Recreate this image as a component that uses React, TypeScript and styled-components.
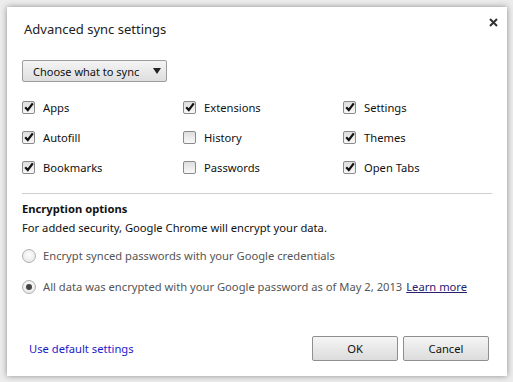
import styled, { createGlobalStyle } from "styled-components";

const GlobalStyle = createGlobalStyle`
  html, body {
    margin: 0;
    padding: 0;
    background: #ececec;
  }
  body {
    padding: 7px 6px 6px 7px;
    font-family: "Noto Sans", "Open Sans", sans-serif;
  }
`;

const Dialog = styled.div`
  position: relative;
  width: 500px;
  height: 369px;
  box-sizing: border-box;
  background: #fff;
  box-shadow: 0 0 6px rgba(0, 0, 0, 0.4);
  padding: 0 15px;
  display: flex;
  flex-direction: column;
  color: #111;
  font-size: 11.2px;
  white-space: nowrap;
`;

const Title = styled.h1`
  margin: 13px 0 0 2px;
  font-size: 13px;
  font-weight: normal;
  line-height: 18px;
  color: #222;
`;

const Close = styled.button`
  position: absolute;
  top: 9px;
  right: 8px;
  width: 12px;
  height: 12px;
  padding: 0;
  border: none;
  background: none;
  display: flex;
  align-items: center;
  justify-content: center;
`;

const SelectButton = styled.button`
  margin-top: 22px;
  width: 145px;
  height: 22px;
  box-sizing: border-box;
  border: 1px solid #9c9c9c;
  border-radius: 2px;
  background: linear-gradient(#f4f4f4, #dedede);
  display: flex;
  align-items: center;
  justify-content: space-between;
  padding: 0 5px 0 10px;
  font-family: inherit;
  font-size: 11px;
  color: #111;
  white-space: nowrap;
`;

const Arrow = styled.span`
  width: 0;
  height: 0;
  border-left: 4.5px solid transparent;
  border-right: 4.5px solid transparent;
  border-top: 6px solid #222;
`;

const SyncGrid = styled.div`
  margin-top: 10px;
  display: grid;
  grid-template-columns: 161px 160px 1fr;
  grid-auto-rows: 30px;
`;

const Option = styled.label`
  display: flex;
  align-items: center;
  gap: 8px;
  height: 30px;
`;

const Box = styled.span`
  width: 13px;
  height: 13px;
  box-sizing: border-box;
  border: 1px solid #8a8a8a;
  border-radius: 2px;
  background: linear-gradient(#dedede, #f8f8f8);
  display: flex;
  align-items: center;
  justify-content: center;
`;

const Divider = styled.hr`
  margin: 11px 0 0;
  border: none;
  border-top: 1px solid #cfcfcf;
`;

const SectionTitle = styled.h2`
  margin: 7px 0 0;
  font-size: 11.2px;
  font-weight: bold;
  line-height: 16px;
`;

const Note = styled.p`
  margin: 3px 0 0;
  line-height: 16px;
`;

const RadioRow = styled.label<{ $first?: boolean }>`
  display: flex;
  align-items: center;
  gap: 7px;
  height: 31px;
  margin-top: ${(p) => (p.$first ? "4px" : "0")};
  color: #555;
`;

const Radio = styled.span<{ $on?: boolean }>`
  width: 14px;
  height: 14px;
  box-sizing: border-box;
  border-radius: 50%;
  border: 1px solid #b0b0b0;
  background: radial-gradient(circle at 50% 40%, #fdfdfd, #e2e2e2);
  display: flex;
  align-items: center;
  justify-content: center;
  &::after {
    content: "";
    display: ${(p) => (p.$on ? "block" : "none")};
    width: 6px;
    height: 6px;
    border-radius: 50%;
    background: #444;
  }
`;

const LearnMore = styled.a`
  color: #28206e;
  text-decoration: underline;
  margin-left: 4px;
`;

const Footer = styled.div`
  margin-top: auto;
  margin-bottom: 15px;
  display: flex;
  align-items: center;
  padding: 0 3px 0 7px;
`;

const DefaultLink = styled.a`
  color: #1a1acd;
  text-decoration: none;
  flex: 1;
`;

const DialogButton = styled.button`
  width: 86px;
  height: 25px;
  box-sizing: border-box;
  border: 1px solid #8f8f8f;
  border-radius: 2px;
  background: linear-gradient(#f5f5f5, #dcdcdc);
  font-family: inherit;
  font-size: 11.2px;
  color: #111;
  & + & {
    margin-left: 5px;
  }
`;

const Check = ({ on }: { on: boolean }) => (
  <Box>
    {on && (
      <svg width="10" height="10" viewBox="0 0 10 10">
        <path d="M1.2 5.2 L3.8 8 L8.8 1.4" fill="none" stroke="#111" strokeWidth="2.2" />
      </svg>
    )}
  </Box>
);

const items: [string, boolean][] = [
  ["Apps", true],
  ["Extensions", true],
  ["Settings", true],
  ["Autofill", true],
  ["History", false],
  ["Themes", true],
  ["Bookmarks", true],
  ["Passwords", false],
  ["Open Tabs", true],
];

export default function App() {
  return (
    <>
      <GlobalStyle />
      <Dialog>
        <Title>Advanced sync settings</Title>
        <Close aria-label="Close">
          <svg width="9" height="9" viewBox="0 0 9 9">
            <path d="M1 1 L8 8 M8 1 L1 8" stroke="#333" strokeWidth="2" />
          </svg>
        </Close>
        <SelectButton>
          Choose what to sync
          <Arrow />
        </SelectButton>
        <SyncGrid>
          {items.map(([name, on]) => (
            <Option key={name}>
              <Check on={on} />
              {name}
            </Option>
          ))}
        </SyncGrid>
        <Divider />
        <SectionTitle>Encryption options</SectionTitle>
        <Note>For added security, Google Chrome will encrypt your data.</Note>
        <RadioRow $first>
          <Radio />
          Encrypt synced passwords with your Google credentials
        </RadioRow>
        <RadioRow>
          <Radio $on />
          <span>
            All data was encrypted with your Google password as of May 2, 2013
            <LearnMore href="#">Learn more</LearnMore>
          </span>
        </RadioRow>
        <Footer>
          <DefaultLink href="#">Use default settings</DefaultLink>
          <DialogButton>OK</DialogButton>
          <DialogButton>Cancel</DialogButton>
        </Footer>
      </Dialog>
    </>
  );
}
